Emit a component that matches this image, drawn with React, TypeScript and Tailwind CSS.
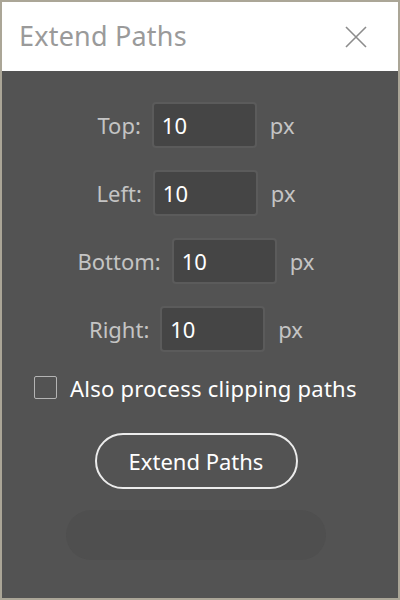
export default function App() {
  const rows = [
    { label: "Top:", value: "10" },
    { label: "Left:", value: "10" },
    { label: "Bottom:", value: "10" },
    { label: "Right:", value: "10" },
  ];

  return (
    <div
      className="w-[400px] h-[600px] flex flex-col border-2 border-[#aba697] bg-[#535353]"
      style={{ fontFamily: '"Noto Sans", "Open Sans", sans-serif' }}
    >
      {/* title bar */}
      <div className="h-[69px] bg-white flex items-center justify-between pl-[17px] pr-[31px] shrink-0">
        <span className="text-[27px] text-[#9a9a9a] tracking-[0.2px]">Extend Paths</span>
        <svg width="22" height="22" viewBox="0 0 22 22" className="text-[#8c8c8c]">
          <path d="M1 1 L21 21 M21 1 L1 21" stroke="currentColor" strokeWidth="1.6" fill="none" />
        </svg>
      </div>

      {/* body */}
      <div className="flex flex-col items-center pt-[31px] pr-2">
        <div className="flex flex-col items-center gap-[22px]">
          {rows.map((r) => (
            <div key={r.label} className="flex items-center">
              <span className="text-[22px] leading-none text-[#c4c4c4] mr-[11px]">{r.label}</span>
              <div className="w-[105px] h-[46px] rounded-[4px] bg-[#454545] border-2 border-[#5b5b5b] flex items-center pl-[8px] text-[22px] leading-none text-white">
                {r.value}
              </div>
              <span className="text-[22px] leading-none text-[#c4c4c4] ml-[13px]">px</span>
            </div>
          ))}
        </div>

        <label className="flex items-center self-start ml-[32px] mt-[22px] h-[27px]">
          <span className="w-[23px] h-[23px] border border-[#b4b4b4] rounded-[2px]" />
          <span className="ml-[13px] text-[22px] leading-none text-white tracking-[0.25px]">Also process clipping paths</span>
        </label>

        <button className="mt-[32px] w-[203px] h-[56px] rounded-full border-2 border-[#ececec] text-[22px] leading-none text-white">
          Extend Paths
        </button>

        <div className="mt-[21px] w-[260px] h-[50px] rounded-full bg-[#4f4f4f]" />
      </div>
    </div>
  );
}
